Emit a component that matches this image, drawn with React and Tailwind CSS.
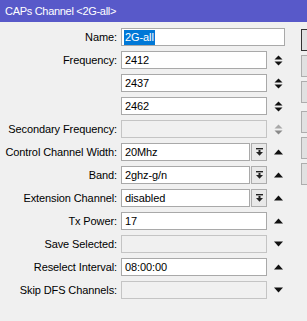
import React from 'react';

const Spinner = ({ disabled }) => (
  <svg width="9" height="11" viewBox="0 0 9 11">
    <polygon points="0.5,4.5 4.5,0.5 8.5,4.5" fill={disabled ? '#a8a8a8' : '#111'} />
    <polygon points="0.5,6.5 4.5,10.5 8.5,6.5" fill={disabled ? '#8a8a8a' : '#111'} />
  </svg>
);

const Up = () => (
  <svg width="9" height="6" viewBox="0 0 9 6">
    <polygon points="0,5.5 4.5,0.5 9,5.5" fill="#111" />
  </svg>
);

const Down = () => (
  <svg width="9" height="6" viewBox="0 0 9 6">
    <polygon points="0,0.5 4.5,5.5 9,0.5" fill="#111" />
  </svg>
);

const DropIcon = () => (
  <svg width="7" height="8" viewBox="0 0 7 8">
    <rect x="0" y="0" width="7" height="1.4" fill="#222" />
    <rect x="2.5" y="2" width="2" height="2.5" fill="#222" />
    <polygon points="0,4 7,4 3.5,7.8" fill="#222" />
  </svg>
);

const Box = ({ value, disabled, width, children }) => (
  <div
    className={`h-[18px] border flex items-center pl-[3px] text-black ${
      disabled ? 'bg-[#f0f0f0] border-[#c4c4c4]' : 'bg-white border-[#a9a9a9]'
    } ${width}`}
  >
    {children || value}
  </div>
);

const Row = ({ label, children, arrow }) => (
  <div className="flex items-center h-[18px]">
    <div className="w-[117px] text-right text-black whitespace-nowrap">{label}</div>
    <div className="ml-[4px] flex items-center">{children}</div>
    {arrow && <div className="w-[22px] flex justify-center items-center">{arrow}</div>}
  </div>
);

const Select = ({ value }) => (
  <div className="flex items-center">
    <Box value={value} width="w-[129px]" />
    <div className="h-[18px] w-[16px] ml-[1px] border border-[#adadad] bg-[#e9e9e9] flex items-center justify-center">
      <DropIcon />
    </div>
  </div>
);

export default function App() {
  return (
    <div className="w-[307px] h-[321px] bg-[#f0f0f0] overflow-hidden font-['Liberation_Sans',Arial,sans-serif] text-[11px] tracking-[-0.1px] leading-none">
      <div className="h-[22px] bg-[#5859c9] text-white text-[11px] tracking-[-0.3px] pl-[5px] flex items-center">
        CAPs Channel &lt;2G-all&gt;
      </div>
      <div className="flex">
        <div className="w-[301px] shrink-0 flex flex-col gap-[5px] pt-[6px]">
          <Row label="Name:">
            <Box width="w-[164px]">
              <span className="bg-[#0078d7] text-white px-[1px] py-[2px] -ml-[1px]">2G-all</span>
            </Box>
          </Row>
          <Row label="Frequency:" arrow={<Spinner />}>
            <Box value="2412" width="w-[146px]" />
          </Row>
          <Row label="" arrow={<Spinner />}>
            <Box value="2437" width="w-[146px]" />
          </Row>
          <Row label="" arrow={<Spinner />}>
            <Box value="2462" width="w-[146px]" />
          </Row>
          <Row label="Secondary Frequency:" arrow={<Spinner disabled />}>
            <Box disabled width="w-[146px]" />
          </Row>
          <Row label="Control Channel Width:" arrow={<Up />}>
            <Select value="20Mhz" />
          </Row>
          <Row label="Band:" arrow={<Up />}>
            <Select value="2ghz-g/n" />
          </Row>
          <Row label="Extension Channel:" arrow={<Up />}>
            <Select value="disabled" />
          </Row>
          <Row label="Tx Power:" arrow={<Up />}>
            <Box value="17" width="w-[146px]" />
          </Row>
          <Row label="Save Selected:" arrow={<Down />}>
            <Box disabled width="w-[146px]" />
          </Row>
          <Row label="Reselect Interval:" arrow={<Up />}>
            <Box value="08:00:00" width="w-[146px]" />
          </Row>
          <Row label="Skip DFS Channels:" arrow={<Down />}>
            <Box disabled width="w-[146px]" />
          </Row>
        </div>
        <div className="flex flex-col pt-[7px] shrink-0">
          <div className="w-[75px] h-[22px] border border-[#333] bg-[#e1e1e1]" />
          <div className="w-[75px] h-[22px] mt-[4px] border border-[#adadad] bg-[#e1e1e1]" />
          <div className="w-[75px] h-[22px] mt-[4px] border border-[#adadad] bg-[#e1e1e1]" />
          <div className="w-[75px] h-[22px] mt-[8px] border border-[#adadad] bg-[#e1e1e1]" />
          <div className="w-[75px] h-[22px] mt-[4px] border border-[#adadad] bg-[#e1e1e1]" />
          <div className="w-[75px] h-[22px] mt-[4px] border border-[#adadad] bg-[#e1e1e1]" />
        </div>
      </div>
    </div>
  );
}
